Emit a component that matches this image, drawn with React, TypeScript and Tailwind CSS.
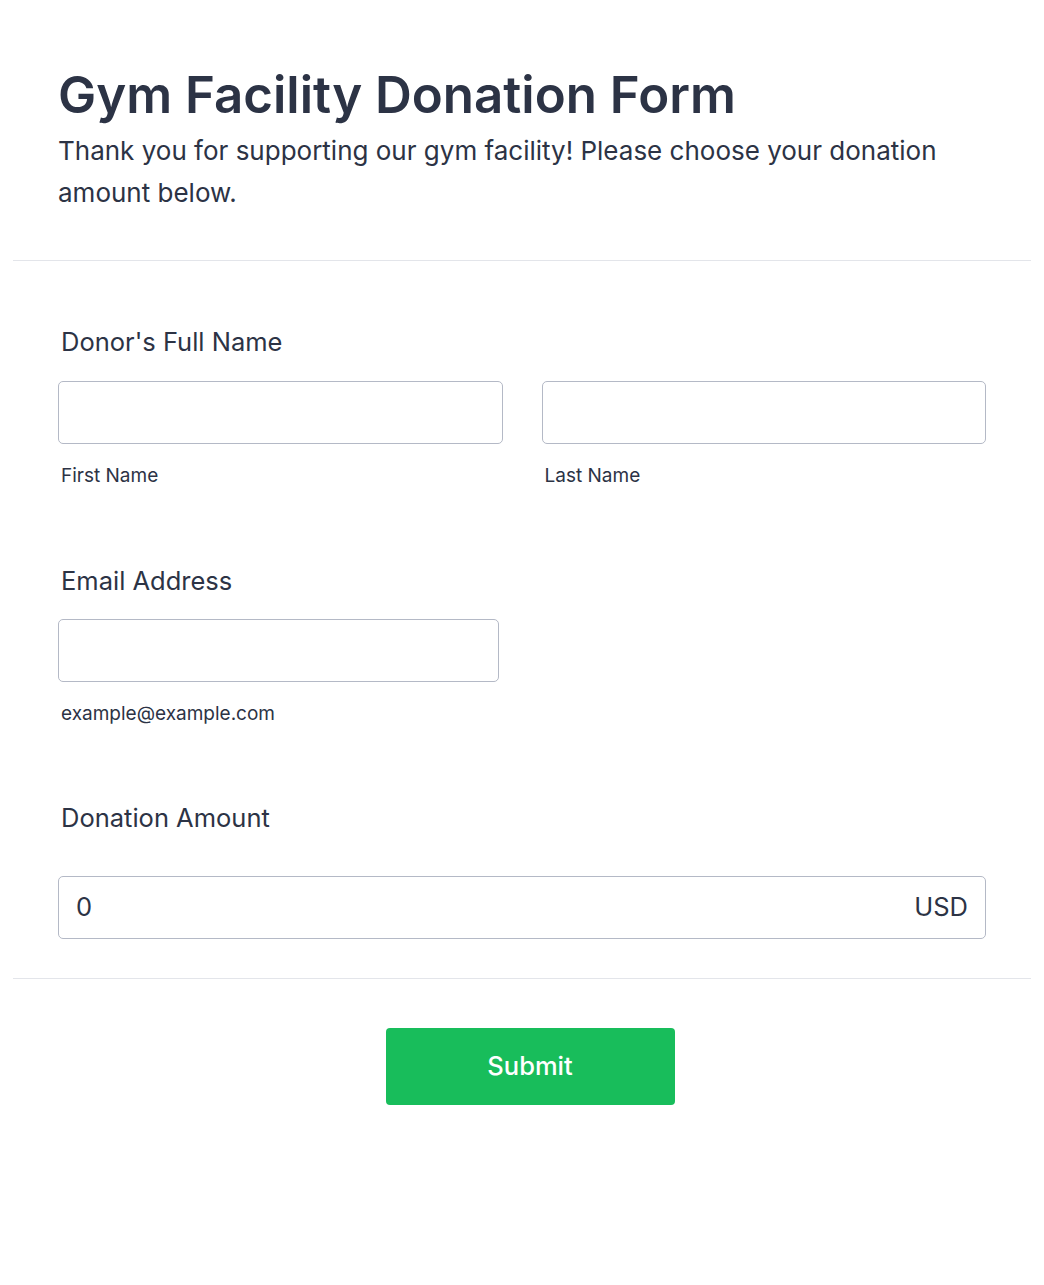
export default function App() {
  return (
    <div className="min-h-screen bg-white font-['Inter',sans-serif] text-[#2c3345]">
      <div className="px-[13px]">
        {/* Header */}
        <div className="px-[45px] pt-[64px] pb-[46px] border-b border-[#e3e5ea]">
          <h1 className="text-[51px] leading-[62px] font-semibold">Gym Facility Donation Form</h1>
          <p className="text-[26px] leading-[42px] mt-[4px] pr-[40px]">
            Thank you for supporting our gym facility! Please choose your donation amount below.
          </p>
        </div>

        {/* Fields */}
        <div className="px-[45px] pt-[66px] pb-[39px] border-b border-[#e3e5ea]">
          <label className="block text-[25.5px] leading-[30px] pl-[3px]">Donor&apos;s Full Name</label>
          <div className="grid grid-cols-2 gap-[39px] mt-[24px]">
            <div>
              <input className="block w-full h-[63px] border border-[#b4b9c6] rounded-[5px] px-4 text-[24px] outline-none" />
              <div className="text-[19px] leading-[24px] mt-[20px] pl-[3px]">First Name</div>
            </div>
            <div>
              <input className="block w-full h-[63px] border border-[#b4b9c6] rounded-[5px] px-4 text-[24px] outline-none" />
              <div className="text-[19px] leading-[24px] mt-[20px] pl-[3px]">Last Name</div>
            </div>
          </div>

          <label className="block text-[25.5px] leading-[30px] pl-[3px] mt-[78px]">Email Address</label>
          <div className="w-[441px] mt-[23px]">
            <input className="block w-full h-[63px] border border-[#b4b9c6] rounded-[5px] px-4 text-[24px] outline-none" />
            <div className="text-[19px] leading-[24px] mt-[20px] pl-[3px]">example@example.com</div>
          </div>

          <label className="block text-[25.5px] leading-[30px] pl-[3px] mt-[77px]">Donation Amount</label>
          <div className="flex items-center h-[63px] mt-[43px] border border-[#b4b9c6] rounded-[5px] px-[17px]">
            <input
              defaultValue="0"
              className="flex-1 min-w-0 text-[25.5px] outline-none bg-transparent"
            />
            <span className="text-[25.5px]">USD</span>
          </div>
        </div>

        {/* Submit */}
        <div className="flex justify-center pl-[16px] pt-[49px] pb-[180px]">
          <button className="w-[289px] h-[77px] bg-[#18bd5b] rounded-[4px] text-white text-[25.5px] font-medium">
            Submit
          </button>
        </div>
      </div>
    </div>
  );
}
